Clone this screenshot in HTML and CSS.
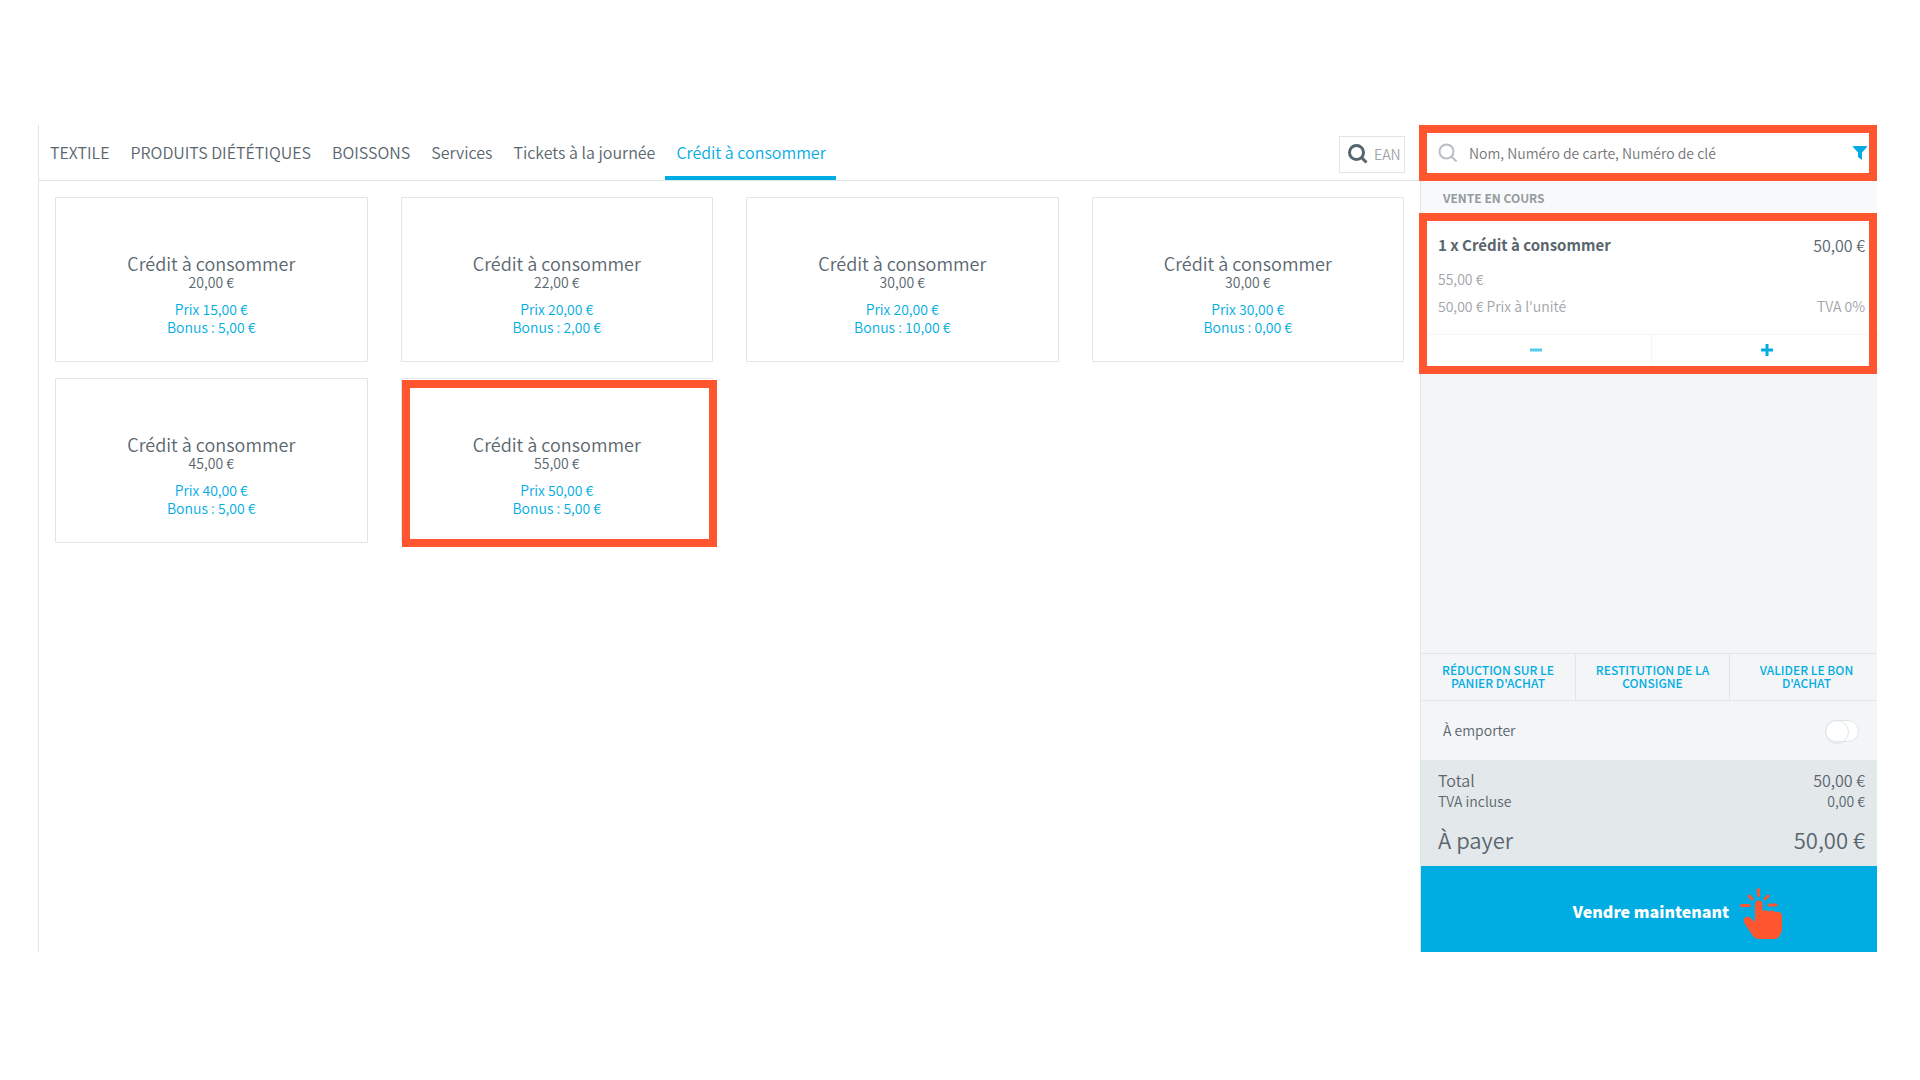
FILE: index.html
```html
<!DOCTYPE html>
<html lang="fr">
<head>
<meta charset="utf-8">
<meta name="viewport" content="width=device-width, initial-scale=1">
<title>Caisse</title>
<link rel="stylesheet" href="styles.css">
</head>
<body>
<div class="app">
  <main class="catalog">
    <header class="topbar">
      <nav class="tabs">
        <a class="tab" href="#">TEXTILE</a>
        <a class="tab" href="#">PRODUITS DIÉTÉTIQUES</a>
        <a class="tab" href="#">BOISSONS</a>
        <a class="tab" href="#">Services</a>
        <a class="tab" href="#">Tickets à la journée</a>
        <a class="tab tab-active" href="#" aria-current="page">Crédit à consommer</a>
      </nav>
      <label class="ean">
        <svg class="ean-icon" viewBox="0 0 20 20" aria-hidden="true"><circle cx="8.5" cy="8.5" r="7"/><path d="M13.5 13.5 L18.5 18.5"/></svg>
        <input class="ean-input" type="text" placeholder="EAN" aria-label="EAN">
      </label>
    </header>
    <div class="cards">
      <button class="card" type="button"><span class="card-name">Crédit à consommer</span><span class="card-value">20,00 €</span><span class="card-price">Prix 15,00 €</span><span class="card-bonus">Bonus : 5,00 €</span></button>
      <button class="card" type="button"><span class="card-name">Crédit à consommer</span><span class="card-value">22,00 €</span><span class="card-price">Prix 20,00 €</span><span class="card-bonus">Bonus : 2,00 €</span></button>
      <button class="card" type="button"><span class="card-name">Crédit à consommer</span><span class="card-value">30,00 €</span><span class="card-price">Prix 20,00 €</span><span class="card-bonus">Bonus : 10,00 €</span></button>
      <button class="card" type="button"><span class="card-name">Crédit à consommer</span><span class="card-value">30,00 €</span><span class="card-price">Prix 30,00 €</span><span class="card-bonus">Bonus : 0,00 €</span></button>
      <button class="card" type="button"><span class="card-name">Crédit à consommer</span><span class="card-value">45,00 €</span><span class="card-price">Prix 40,00 €</span><span class="card-bonus">Bonus : 5,00 €</span></button>
      <button class="card card-marked" type="button"><span class="card-name">Crédit à consommer</span><span class="card-value">55,00 €</span><span class="card-price">Prix 50,00 €</span><span class="card-bonus">Bonus : 5,00 €</span></button>
    </div>
  </main>

  <aside class="cart">
    <div class="customer marked">
      <svg class="customer-icon" viewBox="0 0 20 20" aria-hidden="true"><circle cx="8.5" cy="8.5" r="7"/><path d="M13.5 13.5 L18.5 18.5"/></svg>
      <input class="customer-input" type="text" placeholder="Nom, Numéro de carte, Numéro de clé" aria-label="Client">
      <button class="filter" type="button" aria-label="Filtrer"><svg viewBox="0 0 14 14" aria-hidden="true"><path d="M0 0 H14 V1 L9 6.500 V14 L5 11 V6.500 L0 1 Z"/></svg></button>
    </div>
    <h2 class="cart-title">VENTE EN COURS</h2>
    <section class="item marked">
      <div class="item-info">
        <div class="row item-head"><strong class="item-name">1 x Crédit à consommer</strong><span>50,00 €</span></div>
        <div class="row item-line">55,00 €</div>
        <div class="row item-line"><span>50,00 € Prix à l'unité</span><span>TVA 0%</span></div>
      </div>
      <div class="stepper">
        <button class="step step-less" type="button" aria-label="Retirer"><svg viewBox="0 0 12 12" aria-hidden="true"><path d="M0 6 H12"/></svg></button>
        <button class="step" type="button" aria-label="Ajouter"><svg viewBox="0 0 12 12" aria-hidden="true"><path d="M0 6 H12 M6 0 V12"/></svg></button>
      </div>
    </section>
    <div class="actions">
      <button class="action" type="button">RÉDUCTION SUR LE<br>PANIER D'ACHAT</button>
      <button class="action" type="button">RESTITUTION DE LA<br>CONSIGNE</button>
      <button class="action" type="button">VALIDER LE BON<br>D'ACHAT</button>
    </div>
    <label class="takeaway">À emporter<input class="switch" type="checkbox"></label>
    <div class="totals">
      <div class="row total">Total<span>50,00 €</span></div>
      <div class="row vat">TVA incluse<span>0,00 €</span></div>
      <div class="row due">À payer<span>50,00 €</span></div>
    </div>
    <button class="sell" type="button"><span class="sell-label">Vendre maintenant<svg class="tap" viewBox="0 0 42 51" aria-hidden="true"><path class="rays" d="M18.500 1.500 V7.500 M9 8 L12 11 M28 8 L25 11 M1.500 17.500 H9 M29 17 H36"/><path d="M15 34 V16.500 Q15 12.500 18.800 12.500 Q22.500 12.500 22.500 16.500 V23 Q25.500 21.500 28.500 23.500 Q32 21.500 35 24 Q42 23 42 28 V41 Q42 44 40 47 Q38 51 34 51 H19 Q15 51 13 48 L5 36 Q2 30 6 29 Q9 28 11 30.500 Z"/></svg></span></button>
  </aside>
</div>
</body>
</html>
```
FILE: styles.css
```css
* { box-sizing: border-box; }

:root {
  --blue: #00ade3;
  --accent: #ff5630;
  --line: #dfe6e9;
  --text: #5a666e;
}

body {
  margin: 0;
  background: #fff;
  color: var(--text);
  font: 350 14px/17px "Noto Sans CJK JP", "Noto Sans", sans-serif;
}

button, input { font: inherit; color: inherit; }
button { padding: 0; border: 0; background: none; cursor: pointer; }
svg { display: block; }

.app {
  display: flex;
  min-height: 100vh;
  padding: 125px 43px 128px 38px;
}

/* Catalogue */
.catalog {
  flex: 1;
  min-width: 0;
  border-left: 1px solid var(--line);
}

.topbar {
  display: flex;
  align-items: center;
  justify-content: space-between;
  height: 56px;
  padding-right: 15px;
  border-bottom: 1px solid var(--line);
}

.tabs { display: flex; height: 55px; }

.tab {
  padding: 15px 10px 0 11px;
  border-bottom: 4px solid transparent;
  color: var(--text);
  font-size: 16px;
  line-height: 24px;
  text-decoration: none;
  white-space: nowrap;
}

.tab-active { border-color: var(--blue); color: var(--blue); }

.ean {
  display: flex;
  align-items: center;
  gap: 6px;
  width: 66px;
  height: 37px;
  margin-top: 3px;
  padding-left: 8px;
  border: 1px solid var(--line);
}

.ean-icon, .customer-icon {
  flex: none;
  width: 20px;
  height: 20px;
  fill: none;
  stroke: #56656d;
  stroke-width: 3;
}

.ean-input, .customer-input {
  flex: 1;
  min-width: 0;
  padding: 0;
  border: 0;
  outline: 0;
  background: none;
}

.ean-input::placeholder { color: #a0a6aa; opacity: 1; }

.cards {
  display: grid;
  grid-template-columns: repeat(4, 1fr);
  gap: 16px 33px;
  padding: 16px;
}

.card {
  position: relative;
  display: flex;
  flex-direction: column;
  align-items: center;
  padding: 55px 8px 25px;
  border: 1px solid var(--line);
  border-radius: 1px;
}

.card-name { font-size: 18px; line-height: 20px; }
.card-value, .card-price, .card-bonus { line-height: 18px; }
.card-price { margin-top: 9px; }
.card-price, .card-bonus { color: var(--blue); }

.card-marked::after {
  content: "";
  position: absolute;
  inset: 1px -5px -5px 0;
  border: 8px solid var(--accent);
}

/* Cart */
.cart {
  display: flex;
  flex-direction: column;
  flex: none;
  width: 457px;
  border-left: 1px solid var(--line);
  background: #f3f5f7;
}

.row { display: flex; justify-content: space-between; }

.marked { position: relative; background: #fff; }

.marked::after {
  content: "";
  position: absolute;
  inset: 0 0 0 -2px;
  border: 8px solid var(--accent);
  pointer-events: none;
}

.customer {
  display: flex;
  align-items: center;
  height: 56px;
  padding: 0 10px 0 17px;
}

.customer-icon { stroke: #b8bec2; stroke-width: 2; }
.customer-input { margin-left: 11px; }
.customer-input::placeholder { color: #757575; opacity: 1; }
.filter svg { width: 14px; height: 14px; fill: var(--blue); }

.cart-title {
  margin: 0;
  padding: 8px 22px 7px;
  background: #f8f9fb;
  color: #949b9f;
  font-size: 12px;
  font-weight: 700;
  line-height: 17px;
}

.item { display: flex; flex-direction: column; }
.item-info { padding: 20px 12px 10px 17px; }
.item-head { margin-bottom: 14px; font-size: 16px; line-height: 24px; }
.item-name { font-size: 15px; font-weight: 700; }
.item-line { margin-bottom: 10px; color: #9fa4a8; }
.item-line:last-child { margin-bottom: 9px; }

.stepper {
  display: flex;
  height: 40px;
  margin-right: -5px;
  padding-bottom: 9px;
  border-top: 1px solid #f4f6f7;
}

.step { flex: 1; display: flex; align-items: center; justify-content: center; }
.step + .step { border-left: 1px solid #f4f6f7; }
.step svg { width: 12px; height: 12px; stroke: var(--blue); stroke-width: 3; }
.step-less { opacity: .65; }

.actions {
  display: flex;
  overflow: hidden;
  margin-top: auto;
  border: solid var(--line);
  border-width: 1px 0;
}

.action {
  flex: 0 0 154px;
  height: 46px;
  padding-bottom: 2px;
  color: var(--blue);
  font-size: 12px;
  font-weight: 500;
  line-height: 13px;
}

.action + .action { border-left: 1px solid var(--line); }

.takeaway {
  display: flex;
  align-items: center;
  justify-content: space-between;
  height: 59px;
  padding: 0 18px 0 22px;
}

.switch {
  appearance: none;
  width: 34px;
  height: 22px;
  margin: 0;
  border: 1px solid var(--line);
  border-radius: 11px;
  background: #fff;
}

.switch::before {
  content: "";
  display: block;
  width: 22px;
  height: 22px;
  margin: -1px;
  border: 1px solid var(--line);
  border-radius: 50%;
}

.totals { height: 106px; padding: 10px 12px 0 17px; background: #e3e8ea; }
.total { font-size: 16px; line-height: 20px; }
.vat { line-height: 22px; }
.due { margin-top: 13px; font-size: 22px; line-height: 28px; }

.sell {
  height: 86px;
  padding: 4px 0 0 4px;
  background: var(--blue);
  color: #fff;
  font-size: 16px;
  font-weight: 900;
  line-height: 24px;
}

.sell-label { position: relative; display: inline-block; }

.tap {
  position: absolute;
  top: -11px;
  left: calc(100% + 11px);
  width: 42px;
  height: 51px;
  fill: var(--accent);
}

.rays { stroke: var(--accent); stroke-width: 3; stroke-linecap: round; }
```
